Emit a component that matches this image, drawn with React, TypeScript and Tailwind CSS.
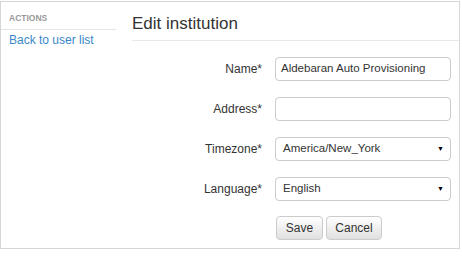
export default function App() {
  const rows = [
    { label: "Name*", value: "Aldebaran Auto Provisioning", select: false },
    { label: "Address*", value: "", select: false },
    { label: "Timezone*", value: "America/New_York", select: true },
    { label: "Language*", value: "English", select: true },
  ];

  return (
    <div className="w-[462px] h-[263px] bg-white font-['Liberation_Sans',Arial,sans-serif] text-[12px] text-[#333]">
      <div className="mt-px w-[460px] h-[248px] border border-[#d6d6d6] flex">
        {/* Sidebar */}
        <div className="w-[115px] pt-[11px]">
          <div className="pl-[8px] pb-[6px] border-b border-[#e5e5e5] text-[8.5px] font-bold text-[#999] leading-[10px]">
            ACTIONS
          </div>
          <a href="#" className="block pl-[8px] pt-[2px] text-[12px] text-[#3a87c8] leading-[16px]">
            Back to user list
          </a>
        </div>

        {/* Main */}
        <div className="flex-1 pl-[16px]">
          <h1 className="text-[17px] leading-[20px] pt-[12px] pb-[6px] border-b border-[#e8e8e8] text-[#333]">
            Edit institution
          </h1>

          <form className="flex flex-col gap-[16px] pt-[16px]">
            {rows.map((r) => (
              <div key={r.label} className="flex items-center">
                <label className="w-[130px] text-right text-[#333]">{r.label}</label>
                <div className="ml-[13px] w-[176px] h-[24px] border border-[#ccc] rounded-[4px] flex items-center pl-[5px] pr-[6px] bg-white">
                  <span
                    className={
                      r.select
                        ? "flex-1 pl-[2px] text-[11.5px] text-[#333] whitespace-nowrap"
                        : "flex-1 text-[11.5px] text-[#333] whitespace-nowrap"
                    }
                  >
                    {r.value}
                  </span>
                  {r.select && <span className="text-[7px] text-black">▼</span>}
                </div>
              </div>
            ))}

            <div className="flex gap-[3px] ml-[144px] -mt-px">
              <button
                type="button"
                className="h-[24px] w-[47px] border border-[#ccc] rounded-[4px] bg-gradient-to-b from-white to-[#e0e0e0] text-[#333]"
              >
                Save
              </button>
              <button
                type="button"
                className="h-[24px] w-[56px] border border-[#ccc] rounded-[4px] bg-gradient-to-b from-white to-[#e0e0e0] text-[#333]"
              >
                Cancel
              </button>
            </div>
          </form>
        </div>
      </div>
    </div>
  );
}
